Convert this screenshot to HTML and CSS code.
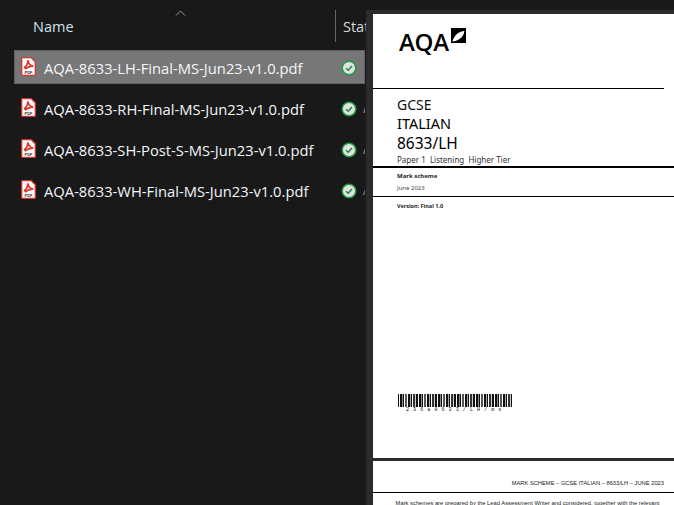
FILE: index.html
```html
<!DOCTYPE html>
<html lang="en">
<head>
<meta charset="utf-8">
<title>AQA mark schemes</title>
<link rel="stylesheet" href="styles.css">
</head>
<body>
<svg class="defs" width="0" height="0" aria-hidden="true">
  <symbol id="pdf" viewBox="0 0 15 19">
    <path d="M1.200.7H10.300L14.300 4.700V17.400a.9.900 0 0 1-.9.900H1.600a.9.900 0 0 1-.9-.9V1.200A.5.500 0 0 1 1.200.700Z" fill="#fff" stroke="#d8322b" stroke-width="1.300"/>
    <path d="M3 11C5.200 9.600 6.700 6.800 6.900 3.400 7.300 6.800 9.300 8.800 12.300 9.100 9.300 9.300 6.200 9.800 4 12.200" fill="none" stroke="#e0352b" stroke-width="1.700"/>
  </symbol>
  <symbol id="ok" viewBox="0 0 16 16">
    <circle cx="8" cy="8" r="6.800" fill="#dfe3df" stroke="#1f9a3c" stroke-width="1.500"/>
    <path d="M5 8.300 7.200 10.300 11 6" fill="none" stroke="#2c7d46" stroke-width="1.500"/>
  </symbol>
</svg>

<main class="window">
  <section class="explorer">
    <header class="columns">
      <span class="col-name">Name</span>
      <svg class="sort" width="11" height="6" viewBox="0 0 11 6" aria-hidden="true"><path d="M1 5.500 5.500 1 10 5.500" fill="none" stroke="#9a9a9a"/></svg>
      <span class="col-status">Status</span>
    </header>
    <ul class="files">
      <li class="file selected">
        <svg class="icon-pdf" viewBox="0 0 15 19"><use href="#pdf"/><text x="7.500" y="16.500" class="pdf-tag">PDF</text></svg>
        <span class="file-name">AQA-8633-LH-Final-MS-Jun23-v1.0.pdf</span>
        <svg class="icon-ok"><use href="#ok"/></svg>
      </li>
      <li class="file">
        <svg class="icon-pdf" viewBox="0 0 15 19"><use href="#pdf"/><text x="7.500" y="16.500" class="pdf-tag">PDF</text></svg>
        <span class="file-name">AQA-8633-RH-Final-MS-Jun23-v1.0.pdf</span>
        <svg class="icon-ok"><use href="#ok"/></svg>
        <span class="file-state">A</span>
      </li>
      <li class="file">
        <svg class="icon-pdf" viewBox="0 0 15 19"><use href="#pdf"/><text x="7.500" y="16.500" class="pdf-tag">PDF</text></svg>
        <span class="file-name">AQA-8633-SH-Post-S-MS-Jun23-v1.0.pdf</span>
        <svg class="icon-ok"><use href="#ok"/></svg>
        <span class="file-state">A</span>
      </li>
      <li class="file">
        <svg class="icon-pdf" viewBox="0 0 15 19"><use href="#pdf"/><text x="7.500" y="16.500" class="pdf-tag">PDF</text></svg>
        <span class="file-name">AQA-8633-WH-Final-MS-Jun23-v1.0.pdf</span>
        <svg class="icon-ok"><use href="#ok"/></svg>
        <span class="file-state">A</span>
      </li>
    </ul>
  </section>

  <section class="preview">
    <article class="page cover">
      <div class="logo">
        <span class="logo-text">AQA</span>
        <svg class="leaf" width="15" height="15" viewBox="0 0 15 15" aria-hidden="true">
          <path fill-rule="evenodd" d="M0 0H15V15H0ZM1.500 13.500C6 13 12 11 13.500 3 8 3.500 3 7 1.500 13.500Z" fill="#000"/>
        </svg>
      </div>
      <hr class="rule rule-top">
      <div class="title">
        <p class="t-gcse">GCSE</p>
        <p class="t-subject">ITALIAN</p>
        <p class="t-code">8633/LH</p>
        <p class="t-paper">Paper 1&nbsp; Listening&nbsp; Higher Tier</p>
      </div>
      <hr class="rule rule-thick">
      <div class="meta">
        <p class="t-mark">Mark scheme</p>
        <p class="t-date">June 2023</p>
      </div>
      <hr class="rule rule-mid">
      <p class="t-version">Version: Final 1.0</p>
      <div class="barcode">
        <div class="bars"></div>
        <p class="bar-text">2 3 6 a 8 6 3 3 / L H / m s</p>
      </div>
    </article>
    <article class="page next">
      <p class="running">MARK SCHEME – GCSE ITALIAN – 8633/LH – JUNE 2023</p>
      <hr class="rule rule-next">
      <p class="body-text">Mark schemes are prepared by the Lead Assessment Writer and considered, together with the relevant</p>
    </article>
  </section>
</main>
</body>
</html>
```
FILE: styles.css
```css
* { box-sizing: border-box; }
html, body { margin: 0; height: 100%; }
body { background: #191919; overflow: hidden; }
.defs { position: absolute; }
.pdf-tag { font: 700 4px "Liberation Sans", sans-serif; text-anchor: middle; fill: #333; }

.window { display: flex; width: 674px; height: 505px; overflow: hidden; }

.explorer {
  width: 366px; flex: none; overflow: hidden;
  color: #fff; font-family: "Open Sans", "Noto Sans", sans-serif;
}
.columns { position: relative; height: 50px; padding: 10px 0 0 33px; display: flex; }
.col-name { font-size: 14.500px; line-height: 34px; color: #cfe0ee; width: 302px; flex: none; }
.sort { position: absolute; left: 175px; top: 10px; }
.col-status {
  border-left: 1px solid #666; height: 32px; padding-left: 7px;
  font-size: 14.500px; line-height: 34px; color: #d8d8d8; white-space: nowrap;
}

.files { list-style: none; margin: 0; padding: 0 1px 0 14px; display: flex; flex-direction: column; gap: 7px; }
.file { height: 34px; display: flex; align-items: center; padding-left: 7px; white-space: nowrap; overflow: hidden; }
.selected { background: #777; border: 1px solid #5f5f5f; padding-left: 6px; }
.icon-pdf { width: 15px; height: 19px; flex: none; margin-top: -1px; }
.file-name { font-size: 14.750px; margin: 1px 0 0 8px; width: 297px; flex: none; color: #f2f6fa; }
.icon-ok { width: 16px; height: 16px; flex: none; margin-top: 1px; }
.file-state { font-size: 12px; color: #9a9a9a; margin-left: 6px; }

.preview {
  flex: 1; min-width: 0; margin-top: 10px; padding: 4px 0 0 7px;
  background: #2b2b2b; display: flex; flex-direction: column; gap: 3px; overflow: hidden;
}
.page { background: #fff; color: #111; font-family: "Liberation Sans", Arimo, sans-serif; flex: none; }
.page p { margin: 0; }
.cover { height: 444px; padding-top: 13px; }
.next { flex: 1; padding-top: 18px; }

.rule { border: 0; margin: 0; background: #000; height: 1px; }
.rule-top { margin: 21px 10px 0 0; }
.rule-thick { height: 2px; }
.rule-next { margin-top: 5px; }

.logo { display: flex; align-items: flex-start; padding-left: 26px; height: 40px; }
.logo-text { font: 600 24px/30px "Open Sans", sans-serif; letter-spacing: -.3px; color: #000; }
.leaf { margin: 1px 0 0 2px; }

.title { padding: 6px 0 0 24px; font-family: "Noto Sans", sans-serif; }
.t-gcse { font-size: 14px; line-height: 19px; }
.t-subject { font-size: 14.500px; line-height: 19px; color: #000; }
.t-code { font-size: 15.500px; line-height: 20px; color: #000; }
.t-paper { font-size: 8px; line-height: 13px; color: #333; }

.meta { padding: 4px 0 0 24px; font-family: "Noto Sans", sans-serif; }
.t-mark { font-size: 6px; line-height: 9px; font-weight: 700; color: #222; }
.t-date { font-size: 6px; line-height: 15px; color: #444; }
.t-version { padding: 5px 0 0 24px; font: 700 5.500px/8px "Noto Sans", sans-serif; color: #222; }

.barcode { margin: 184px 0 0 25px; width: 114px; }
.bars {
  height: 13px;
  background: repeating-linear-gradient(90deg,
    #111 0 1px, #fff 1px 2px, #111 2px 4px, #888 4px 5px, #111 5px 6px,
    #fff 6px 7px, #555 7px 9px, #fff 9px 10px, #111 10px 12px, #aaa 12px 13px,
    #111 13px 14px, #fff 14px 15px, #333 15px 17px, #ccc 17px 18px, #111 18px 19px);
}
.bar-text { font: 5px/6px "Liberation Mono", monospace; letter-spacing: .55px; padding-left: 8px; white-space: nowrap; }

.running { font-size: 5.760px; line-height: 8px; text-align: right; padding-right: 10px; color: #222; }
.body-text { font-size: 5.800px; line-height: 8px; text-align: center; padding: 6px 0 0 8px; color: #222; white-space: nowrap; }
```
